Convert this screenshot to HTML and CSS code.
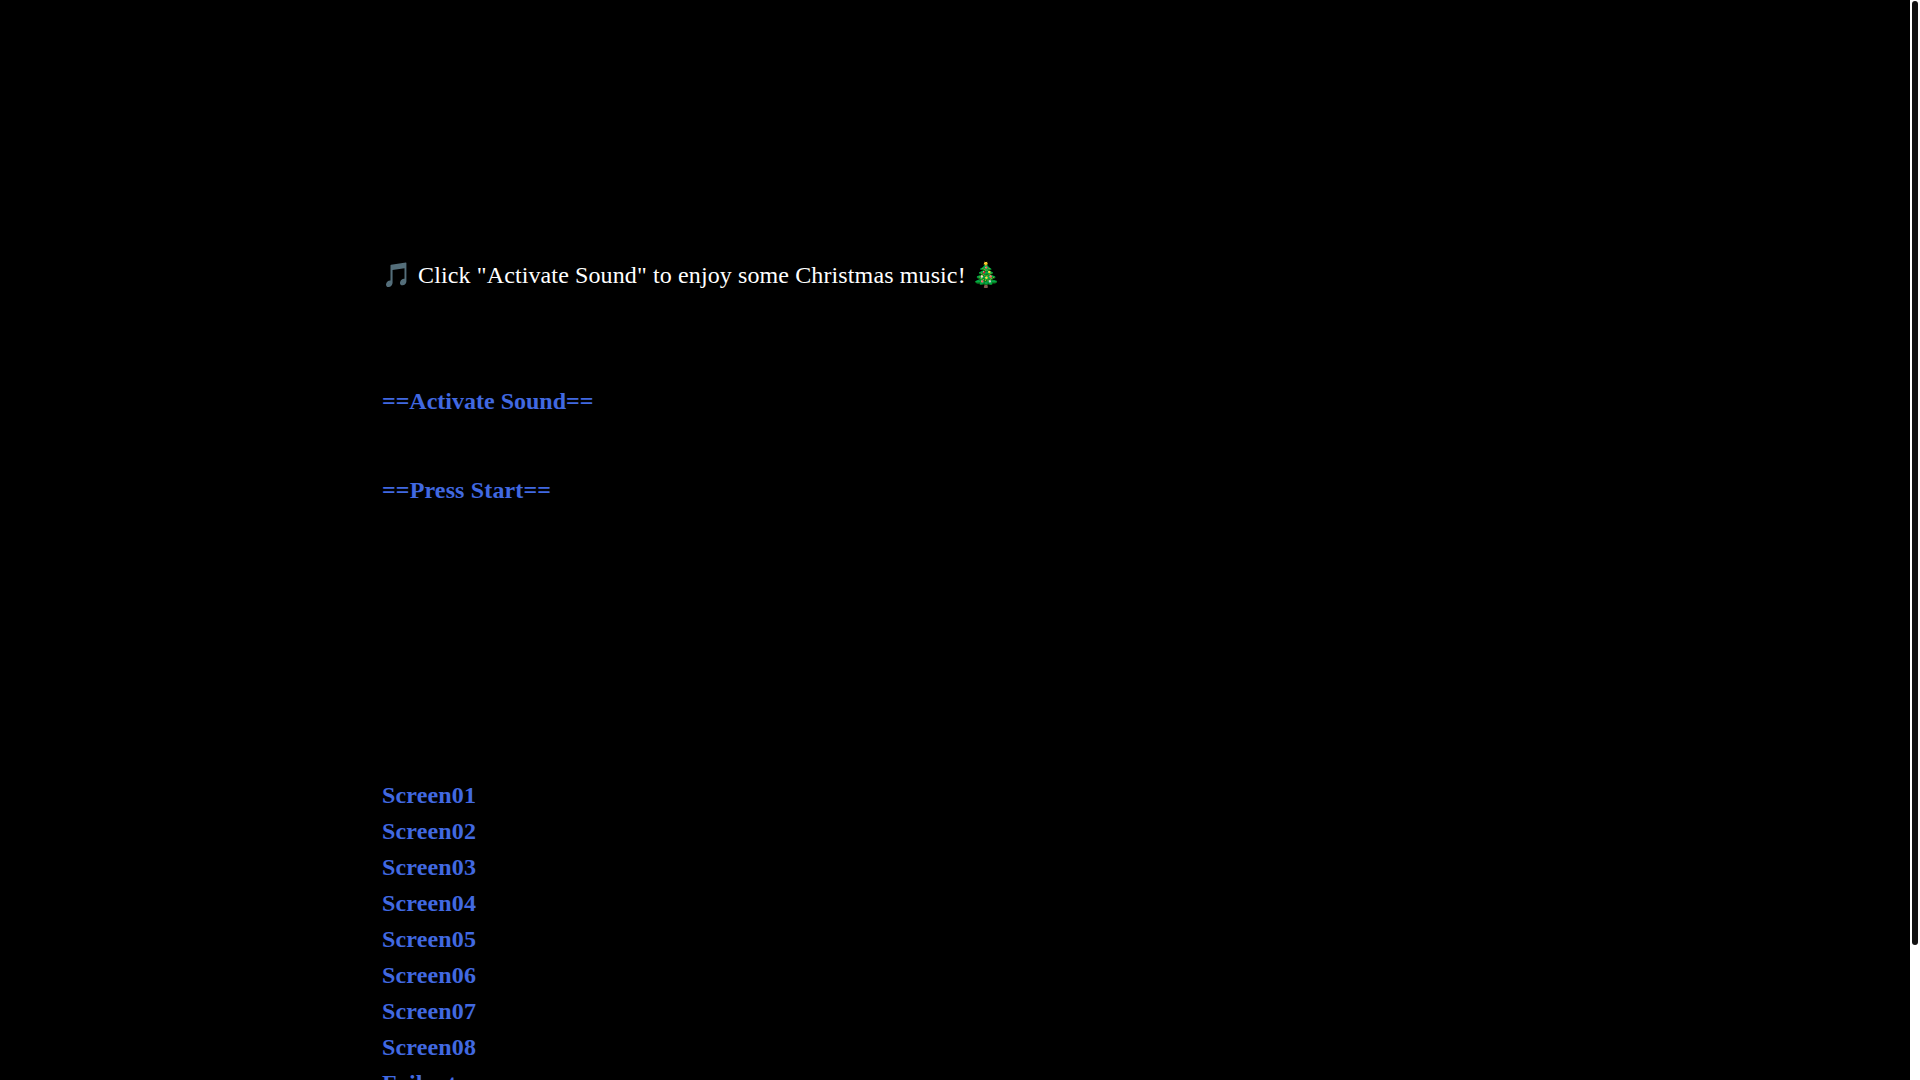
FILE: index.html
```html
<!DOCTYPE html>
<html lang="en">
<head>
<meta charset="utf-8">
<title>Christmas</title>
<link rel="stylesheet" href="styles.css">
</head>
<body>
<main class="page">
<p class="notice">🎵 Click "Activate Sound" to enjoy some Christmas music! 🎄</p>
<p class="action action-first"><a href="#">==Activate Sound==</a></p>
<p class="action action-second"><a href="#">==Press Start==</a></p>
<nav class="screens">
<a href="#">Screen01</a>
<a href="#">Screen02</a>
<a href="#">Screen03</a>
<a href="#">Screen04</a>
<a href="#">Screen05</a>
<a href="#">Screen06</a>
<a href="#">Screen07</a>
<a href="#">Screen08</a>
<a href="#">Failout</a>
</nav>
</main>
<div class="scroll-track"><div class="scroll-thumb"></div></div>
</body>
</html>
```
FILE: styles.css
```css
html { background: #000; height: 100%; overflow: hidden; }
body { margin: 0; height: 100%; overflow: hidden; background: #000; color: #fff; font-family: "Liberation Serif", "Noto Color Emoji", serif; font-size: 24px; line-height: 36px; text-rendering: optimizeSpeed; }
.page { margin-left: 382px; padding-top: 257px; padding-bottom: 86px; }
p { margin: 0; }
a { color: #4169e1; font-weight: bold; text-decoration: none; }
.notice { letter-spacing: 0.115px; }
.action-first { margin-top: 90px; }
.action-second { margin-top: 53px; letter-spacing: 0.15px; }
.screens { display: flex; flex-direction: column; align-items: flex-start; margin-top: 269px; letter-spacing: 0.15px; }
.scroll-track { position: fixed; top: 0; right: 0; bottom: 0; width: 10px; padding: 1px 2px 0; box-sizing: border-box; background: #fff; }
.scroll-thumb { height: 944px; border-radius: 3px; background: #111; }
```
